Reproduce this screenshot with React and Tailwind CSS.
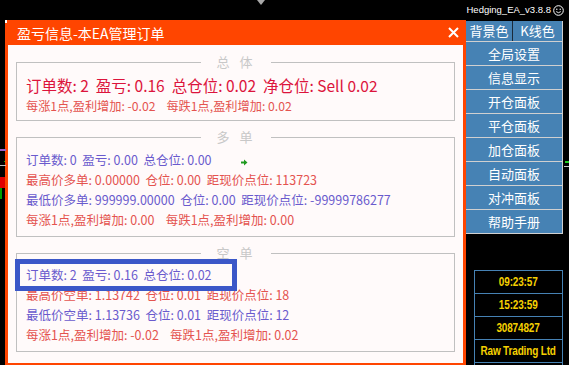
import React from "react";

const CJK = { fontFamily: '"Noto Sans CJK SC", "Noto Sans", sans-serif' };

function Box({ label, children, className }) {
  return (
    <div className={"relative mx-[8px] border border-[#c0c0c0] " + className}>
      <div className="absolute left-1/2 -translate-x-1/2 -top-[9px] bg-[#fffafa] px-[8px] text-[13px] leading-[16px] text-[#c8c8c8] tracking-[10px] pl-[16px]">
        {label}
      </div>
      {children}
    </div>
  );
}

const L = ({ c, s = "text-[12.5px]", children }) => (
  <div className={"whitespace-pre leading-[20px] " + s} style={{ color: c }}>
    {children}
  </div>
);

const RED = "#e4534f";
const BLUE = "#6a5acd";

export default function App() {
  const buttons = ["全局设置", "信息显示", "开仓面板", "平仓面板", "加仓面板", "自动面板", "对冲面板", "帮助手册"];
  const infos = ["09:23:57", "15:23:59", "30874827", "Raw Trading Ltd"];
  return (
    <div className="relative w-[569px] h-[365px] bg-black overflow-hidden" style={CJK}>
      {/* chart fragments */}
      <div className="absolute left-[257px] top-0 w-0 h-0 border-l-[4px] border-r-[4px] border-t-[5px] border-l-transparent border-r-transparent border-t-[#a8a8a8]" />
      <div className="absolute left-0 top-[149px] w-[6px] h-[2px] bg-[#9a5fc8]" />
      <div className="absolute left-0 top-[165px] w-[6px] h-[1px] bg-[#c0c0c0]" />
      <div className="absolute left-[4px] top-[161px] w-[1px] h-[1px] bg-[#00c000]" />
      <div className="absolute left-0 top-[177px] w-[5px] h-[11px] bg-[#e00000]" />
      <div className="absolute left-0 top-[188px] w-[2px] h-[11px] bg-[#00a000]" />
      <div className="absolute left-[565px] top-[161px] w-[4px] h-[2px] bg-[#22cc22]" />
      <div className="absolute left-[564px] top-[166px] w-[5px] h-[1px] bg-[#c8c8c8]" />
      <div className="absolute left-[5px] top-[20px] w-[2px] h-[3px] bg-white" />

      {/* top bar */}
      <div className="h-[20px] flex items-center justify-end pr-[5px] gap-[2px]">
        <span className="text-white text-[9.5px] leading-none" style={{ fontFamily: '"Liberation Sans", Arial, sans-serif' }}>
          Hedging_EA_v3.8.8
        </span>
        <svg width="11" height="11" viewBox="0 0 11 11" className="mt-[1px]">
          <circle cx="5.5" cy="5.5" r="4.8" fill="none" stroke="white" strokeWidth="1" />
          <circle cx="3.8" cy="4.2" r="0.7" fill="white" />
          <circle cx="7.2" cy="4.2" r="0.7" fill="white" />
          <path d="M3.2 6.6 Q5.5 8.8 7.8 6.6" fill="none" stroke="white" strokeWidth="0.9" />
        </svg>
      </div>

      <div className="flex">
        {/* panel */}
        <div className="ml-[5px] w-[461px] h-[345px] bg-[#ff4500] flex flex-col px-[3px] pb-[2px]">
          <div className="h-[25px] flex items-center justify-between pl-[9px] pr-[4px] text-white">
            <span className="text-[14px] leading-none">盈亏信息-本EA管理订单</span>
            <svg width="11" height="11" viewBox="0 0 11 11">
              <path d="M1 1 L10 10 M10 1 L1 10" stroke="white" strokeWidth="2" />
            </svg>
          </div>
          <div className="flex-1 bg-[#fffafa] flex flex-col pt-[17px]">
            <Box label="总体" className="h-[59px] pl-[9px] pt-[12px]">
              <L c="#dc143c" s="text-[15.5px] leading-[21px]">订单数: 2  盈亏: 0.16  总仓位: 0.02  净仓位: Sell 0.02</L>
              <L c={RED} s="text-[12.2px] leading-[19px]">每涨1点,盈利增加: -0.02    每跌1点,盈利增加: 0.02</L>
            </Box>
            <Box label="多单" className="mt-[16px] h-[100px] pl-[9px] pt-[12px]">
              <div className="flex items-center">
                <L c={BLUE}>订单数: 0  盈亏: 0.00  总仓位: 0.00</L>
                <svg width="7" height="7" viewBox="0 0 7 7" className="ml-[29px] mt-[5px]">
                  <path d="M0 2.5 H3 V0.5 L6.5 3.5 L3 6.5 V4.5 H0 Z" fill="#1f9a1f" />
                </svg>
              </div>
              <L c={RED}>最高价多单: 0.00000  仓位: 0.00  距现价点位: 113723</L>
              <L c={BLUE}>最低价多单: 999999.00000  仓位: 0.00  距现价点位: -99999786277</L>
              <L c={RED}>每涨1点,盈利增加: 0.00    每跌1点,盈利增加: 0.00</L>
            </Box>
            <Box label="空单" className="mt-[16px] h-[99px] pl-[9px] pt-[11px]">
              <L c={BLUE}>订单数: 2  盈亏: 0.16  总仓位: 0.02</L>
              <L c={RED}>最高价空单: 1.13742  仓位: 0.01  距现价点位: 18</L>
              <L c={BLUE}>最低价空单: 1.13736  仓位: 0.01  距现价点位: 12</L>
              <L c={RED}>每涨1点,盈利增加: -0.02    每跌1点,盈利增加: 0.02</L>
              {/* annotation highlight overlay */}
              <div className="absolute left-[-2px] top-[5px] w-[222px] h-[32px] border-[5px] border-[#3b57c8]" />
            </Box>
          </div>
        </div>

        {/* right column */}
        <div className="w-[97px] flex flex-col">
          <div className="mt-[1px] flex h-[21px] border-b border-[#d0d0d0]">
            <div className="w-[47px] bg-[#4682b4] border-r border-[#1a2a3a] text-white text-[13px] flex items-center justify-center">背景色</div>
            <div className="flex-1 bg-[#4682b4] border-r border-[#d0d0d0] text-white text-[13px] flex items-center justify-center">K线色</div>
          </div>
          {buttons.map((b) => (
            <div key={b} className="h-[24px] bg-[#4682b4] border-b border-r border-[#d0d0d0] text-white text-[13px] flex items-center justify-center">
              {b}
            </div>
          ))}
          <div className="mt-[36px] ml-[8px] border-l border-r border-[#4682b4]">
            {infos.map((t) => (
              <div
                key={t}
                className="h-[23px] border-t border-[#4682b4] flex items-center justify-center"
              >
                <span
                  className="whitespace-nowrap text-[#f5d000] font-bold text-[12.5px] leading-none scale-x-[0.8] tracking-[-0.2px]"
                  style={{ fontFamily: '"Liberation Sans", Arial, sans-serif' }}
                >
                  {t}
                </span>
              </div>
            ))}
            <div className="h-[10px] border-t border-[#4682b4]" />
          </div>
        </div>
      </div>
    </div>
  );
}
